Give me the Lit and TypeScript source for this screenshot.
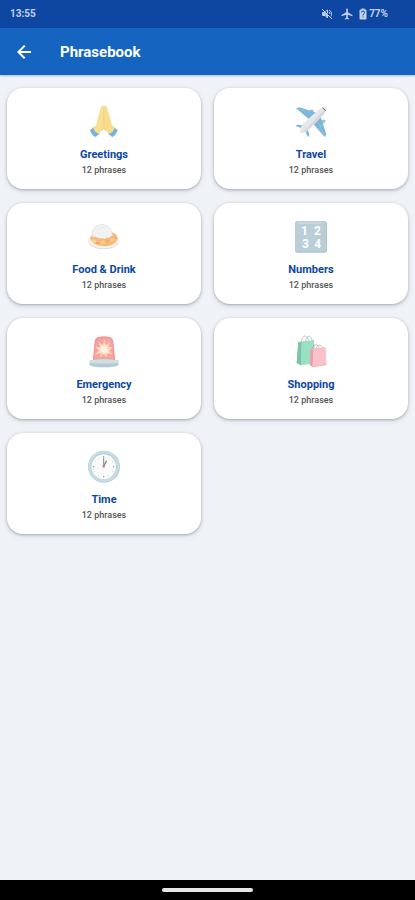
import { LitElement, html, css, svg, type TemplateResult } from "lit";
import { customElement, property } from "lit/decorators.js";

const hands = html`<svg viewBox="48 18 108 108" aria-hidden="true">
  <path d="M60 97 L72 86 L89 107 L76 117 Q65 112 60 97Z" fill="#7ab4da" />
  <path d="M143 97 L131 86 L114 107 L127 117 Q138 112 143 97Z" fill="#7ab4da" />
  <path d="M101 24 Q95 21 92 30 L83 61 L80 79 L70 90 Q74 103 86 107 L101 93Z" fill="#fbdf91" />
  <path d="M102 24 Q108 21 111 30 L121 61 L124 79 L134 90 Q130 103 118 107 L101 93Z" fill="#f9dc8c" />
  <path d="M101 25 L101 88 L96 97 M102 90 L107 98" fill="none" stroke="#e8c67a" stroke-width="2" />
  <path d="M62 94 L80 115 M141 94 L123 115" stroke="#6fa8ce" stroke-width="1.5" />
</svg>`;

const plane = html`<svg viewBox="51 18 108 108" aria-hidden="true">
  <path d="M100 37 q6 -6 15 1 l-7 7 q-8 -1 -8 -8Z M137 66 q8 -4 12 1 q0 8 -7 10 l-7 -5Z" fill="#b8bec2" />
  <path d="M60 31 L71 28 L121 44 L103 67Z" fill="#7ab5da" />
  <path d="M146 117 L151 109 L134 56 L110 76Z" fill="#7ab5da" />
  <path d="M58 84 L64 80 L89 83 L82 92Z M97 118 L100 111 L94 90 L86 97Z" fill="#7ab5da" />
  <path d="M151 26 Q142 23 130 33 L81 77 Q73 87 71 101 Q71 107 78 105 Q92 102 102 92 L144 48 Q154 36 151 26Z" fill="#e5e8ea" />
  <path d="M151 27 Q152 37 143 47 L101 91 Q91 101 75 104 Q87 97 99 84 L141 40Z" fill="#d3d7d9" />
  <path d="M139 29 L149 38" stroke="#68737b" stroke-width="3" />
  <path d="M66 32 L108 49 M144 111 L128 71" stroke="#95c6e3" stroke-width="2" />
</svg>`;

const food = html`<svg viewBox="48 18 108 108" aria-hidden="true">
  <ellipse cx="101" cy="85" rx="46" ry="24" fill="#dcdedf" />
  <ellipse cx="101" cy="82" rx="46" ry="24" fill="#f2f1ef" />
  <path d="M61 76 Q63 62 79 61 L127 58 Q143 64 143 77 Q137 99 103 100 Q67 98 61 76Z" fill="#f6bb7b" />
  <path d="M71 78 l9 5 -5 6 -9 -5Z M93 86 l9 -3 4 9 -10 2Z M123 75 l10 1 -2 8 -10 -2Z M119 62 l10 2 -3 7Z" fill="#ffd38e" />
  <path d="M80 86 l8 3 -3 5 -7 -3Z M109 79 l8 5 -6 6Z M134 70 l6 4 -3 5Z" fill="#efa46d" />
  <path d="M67 72 Q64 44 85 37 Q99 31 112 39 Q124 46 127 65 Q121 69 118 74 Q111 73 105 78 Q96 74 87 76 Q79 69 67 72Z" fill="#f3f3f3" />
  <path d="M67 71 Q64 44 85 37 Q99 31 112 39 Q124 46 127 65" fill="none" stroke="#d9dadb" stroke-width="2" />
  <path d="M82 48 l5 2 M99 43 l5 2 M88 61 l5 1 M110 55 l4 3 M77 62 l3 2 M102 67 l5 -1" stroke="#dfe0e1" stroke-width="2" stroke-linecap="round" />
</svg>`;

const numbers = html`<svg viewBox="51 18 108 108" aria-hidden="true">
  <rect x="57" y="25" width="96" height="94" rx="7" fill="#a6bec6" />
  <rect x="57" y="25" width="94" height="91" rx="7" fill="#b9ced6" />
  <path d="M65 30 H135" stroke="#d8e5e9" stroke-width="3" stroke-linecap="round" />
  <g class="digits">
    <text x="85" y="66">1</text><text x="124" y="66">2</text>
    <text x="88" y="106">3</text><text x="125" y="106">4</text>
  </g>
</svg>`;

const siren = html`<svg viewBox="48 18 108 108" aria-hidden="true">
  <path d="M68 101 L74 40 Q75 28 88 26 Q102 24 116 26 Q128 28 130 40 L136 101Z" fill="#f39694" />
  <path d="M73 92 L78 44 Q79 33 91 31 L114 31 Q124 33 125 43 L131 92Z" fill="#f5a5a0" />
  <path d="M103 34 L107 51 L120 41 L115 57 L130 58 L117 67 L128 79 L113 75 L110 89 L101 78 L91 90 L91 75 L75 80 L86 67 L75 57 L90 57 L86 41 L98 51Z" fill="#fcd2bd" />
  <path d="M103 46 L106 58 L115 51 L110 62 L122 64 L112 69 L117 77 L107 73 L101 79 L97 71 L86 75 L93 66 L83 61 L95 60 L92 50 L100 57Z" fill="#fff1dc" />
  <path d="M60 97 Q102 91 144 97 L146 110 Q143 117 102 118 Q60 117 58 110Z" fill="#b4cbd3" />
  <path d="M60 97 Q102 91 144 97 L145 104 Q102 109 59 104Z" fill="#d0dfe5" />
</svg>`;

const bags = html`<svg viewBox="51 18 108 108" aria-hidden="true">
  <path d="M76 42 Q79 23 88 24 Q97 26 97 41 M88 40 Q91 24 100 24 Q108 26 109 39" fill="none" stroke="#a7b0ad" stroke-width="2" />
  <path d="M67 41 L114 37 L117 105 L75 112 L62 105Z" fill="#91dcbb" />
  <path d="M67 41 L77 45 L75 112 L62 105Z" fill="#7cc3a9" />
  <path d="M77 45 L114 37 L116 104 L75 112Z" fill="#9be0c3" />
  <path d="M109 63 Q112 48 121 50 Q130 51 130 63 M120 61 Q124 48 132 51 Q139 53 139 63" fill="none" stroke="#b4a4a9" stroke-width="2" />
  <path d="M104 62 L148 58 L151 110 L111 117 L101 110Z" fill="#f5b5c0" />
  <path d="M104 62 L112 65 L110 117 L101 110Z" fill="#e3a0b0" />
  <path d="M112 65 L148 58 L151 110 L110 117Z" fill="#fbc1c8" />
  <path d="M111 117 L151 110" stroke="#ca939d" stroke-width="1" />
</svg>`;

const clock = html`<svg viewBox="48 18 108 108" aria-hidden="true">
  <circle cx="102" cy="71" r="48" fill="#b8d0d8" />
  <circle cx="101" cy="70" r="46" fill="#c7dce3" />
  <circle cx="101" cy="70" r="39" fill="#b4c8d0" />
  <circle cx="101" cy="71" r="37" fill="#fafafa" />
  ${Array.from({ length: 12 }, (_, i) => {
    const a = (i * Math.PI) / 6;
    return svg`<circle cx=${101 + 30 * Math.sin(a)} cy=${71 - 30 * Math.cos(a)} r=${i % 3 ? 1 : 2} fill="#84898c" />`;
  })}
  <path d="M101 70 L101 45" stroke="#8c888a" stroke-width="3" stroke-linecap="round" />
  <path d="M101 70 L109 54" stroke="#8c888a" stroke-width="4" stroke-linecap="round" />
  <circle cx="101" cy="70" r="4" fill="#b0958e" />
</svg>`;

const categories: { name: string; count: number; icon: TemplateResult }[] = [
  { name: "Greetings", count: 12, icon: hands },
  { name: "Travel", count: 12, icon: plane },
  { name: "Food & Drink", count: 12, icon: food },
  { name: "Numbers", count: 12, icon: numbers },
  { name: "Emergency", count: 12, icon: siren },
  { name: "Shopping", count: 12, icon: bags },
  { name: "Time", count: 12, icon: clock },
];

@customElement("phrase-card")
export class PhraseCard extends LitElement {
  @property({ attribute: false }) icon?: TemplateResult;
  @property() name = "";
  @property({ type: Number }) count = 0;

  static styles = css`
    :host { display: block; }
    .card {
      display: flex;
      flex-direction: column;
      align-items: center;
      width: 100%;
      margin: 0;
      padding: 16px 8px 13px;
      border: 0;
      border-radius: 16px;
      background: #fff;
      box-shadow: 0 1px 3px rgba(40, 50, 65, 0.35), 0 2px 6px rgba(40, 50, 65, 0.08);
      font-family: Roboto, sans-serif;
      cursor: pointer;
    }
    svg { display: block; width: 36px; height: 36px; }
    .digits { font: 700 36px Roboto, sans-serif; fill: #fff; text-anchor: middle; }
    .name { margin-top: 7px; font-size: 11px; line-height: 16px; font-weight: 700; color: #0d47a1; }
    .count { margin-top: 1px; font-size: 9px; line-height: 12px; font-weight: 500; color: #555; }
  `;

  render() {
    return html`<button class="card" type="button">
      ${this.icon}
      <span class="name">${this.name}</span>
      <span class="count">${this.count} phrases</span>
    </button>`;
  }
}

@customElement("app-root")
export class AppRoot extends LitElement {
  static styles = css`
    :host {
      display: flex;
      flex-direction: column;
      min-height: 100vh;
      background: #eff3f8;
      font-family: Roboto, sans-serif;
    }
    svg { display: block; }
    .status {
      display: flex;
      align-items: center;
      justify-content: space-between;
      height: 28px;
      padding: 0 27px 0 10px;
      background: #0d47a1;
      color: #c3d1ee;
      font-size: 10px;
      line-height: 12px;
      font-weight: 700;
    }
    .indicators { display: flex; align-items: center; }
    .mute { width: 12px; height: 12px; margin-right: 8px; }
    .airplane { width: 12px; height: 12px; margin-right: 6px; }
    .battery { width: 8px; height: 12px; margin-right: 2px; }
    .bar {
      display: flex;
      align-items: center;
      height: 47px;
      padding: 0 16px;
      background: #1565c0;
      box-shadow: 0 1px 2px rgba(30, 50, 80, 0.3);
      color: #fff;
    }
    .back {
      display: flex;
      padding: 0;
      border: 0;
      background: none;
      color: inherit;
      cursor: pointer;
    }
    .back svg { width: 16px; height: 16px; }
    h1 { margin: 0 0 0 28px; font-size: 15px; line-height: 20px; font-weight: 700; }
    main {
      flex: 1;
      display: grid;
      grid-template-columns: repeat(2, minmax(0, 1fr));
      align-content: start;
      gap: 14px 13px;
      padding: 13px 7px;
    }
    .nav {
      display: flex;
      align-items: center;
      justify-content: center;
      height: 20px;
      background: #000;
    }
    .handle { width: 91px; height: 4px; border-radius: 2px; background: #e6e6e6; }
  `;

  render() {
    return html`
      <div class="status">
        <span>13:55</span>
        <div class="indicators">
          <svg class="mute" viewBox="0 0 24 24" fill="none" stroke="currentColor" stroke-width="2" aria-hidden="true">
            <path d="M2 2 L22 22 M9 7 L13 4 V11 M13 14 V20 L8 15 H3 V9 H8 M16 4 Q22 7 21 13 Q21 15 20 17 M16 8 Q18 10 18 12" />
            <path d="M4 10 H8 L12 13 V18 L8 14 H4Z" fill="currentColor" stroke="none" />
          </svg>
          <svg class="airplane" viewBox="1 1 22 22" fill="currentColor" aria-hidden="true">
            <path d="M22 16v-2l-8.500-5V3.500a1.500 1.500 0 0 0-3 0V9L2 14v2l8.500-2.500V19L8 20.500V22l4-1 4 1v-1.500L13.500 19v-5.500Z" />
          </svg>
          <svg class="battery" viewBox="0 0 16 24" aria-hidden="true">
            <path d="M5 1 H11 V3 H13 Q15 3 15 5 V21 Q15 23 13 23 H3 Q1 23 1 21 V5 Q1 3 3 3 H5Z" fill="currentColor" />
            <path d="M5 9 Q5 6 8 6 Q11 6 11 9 Q11 11 8 13 V15 M8 17 V19" fill="none" stroke="#0d47a1" stroke-width="2" />
          </svg>
          <span>77%</span>
        </div>
      </div>
      <header class="bar">
        <button class="back" type="button" aria-label="Back">
          <svg viewBox="4 4 16 16" fill="currentColor" aria-hidden="true">
            <path d="M19 11H8.800l4.700-4.700L12 5l-7 7 7 7 1.400-1.400L8.800 13H19Z" />
          </svg>
        </button>
        <h1>Phrasebook</h1>
      </header>
      <main>
        ${categories.map(
          (c) => html`<phrase-card .icon=${c.icon} .name=${c.name} .count=${c.count}></phrase-card>`,
        )}
      </main>
      <div class="nav"><div class="handle"></div></div>
    `;
  }
}
